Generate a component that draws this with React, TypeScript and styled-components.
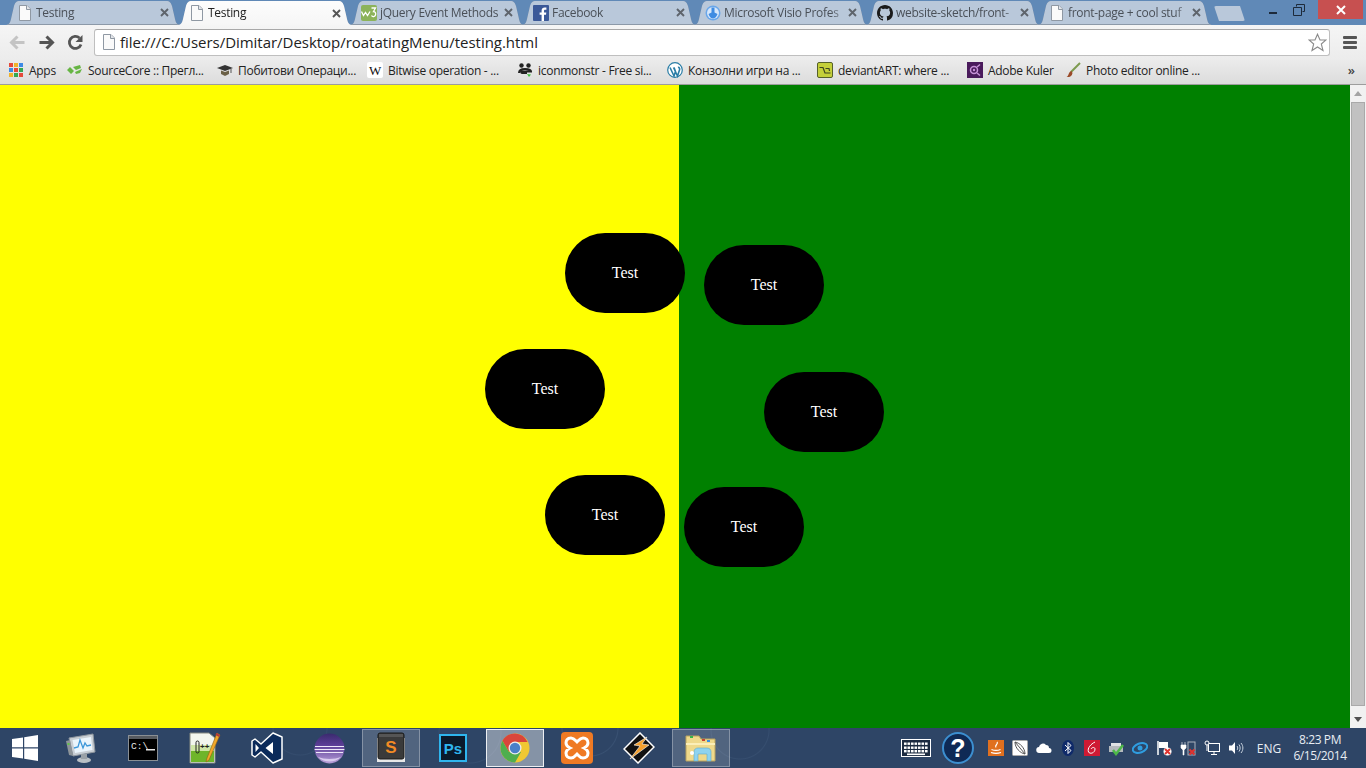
import React from 'react'
import styled, { createGlobalStyle } from 'styled-components'

const GlobalStyle = createGlobalStyle`
  html, body { margin: 0; padding: 0; height: 100%; overflow: hidden; }
  #root { height: 100%; }
  * { box-sizing: border-box; }
`

const Page = styled.div`
  width: 1366px;
  height: 768px;
  display: flex;
  flex-direction: column;
  font-family: "Open Sans", "Noto Sans", sans-serif;
  overflow: hidden;
`

/* ---------- tab strip ---------- */
const TitleBar = styled.div`
  height: 25px;
  flex: none;
  display: flex;
  background: #6089b7;
  padding-left: 5px;
  position: relative;
`

const TabWrap = styled.div<{ $active?: boolean }>`
  width: 176px;
  height: 25px;
  margin-right: -4px;
  flex: none;
  position: relative;
  z-index: ${p => (p.$active ? 2 : 1)};
  filter: drop-shadow(0 0 0.6px ${p => (p.$active ? '#8a99ab' : '#6f7f93')});
`

const TabShape = styled.div<{ $active?: boolean }>`
  height: 25px;
  padding: 1px 0 0 12px;
  display: flex;
  align-items: center;
  clip-path: path('M0 25 C4 25 5 23 6 19 L9 6 C10 3 11 1 15 1 L161 1 C165 1 166 3 167 6 L170 19 C171 23 172 25 176 25 Z');
  background: ${p => (p.$active ? 'linear-gradient(#fdfdfd, #f6f6f6)' : '#b9c8da')};
  ${p => (p.$active ? '' : 'border-bottom: 1px solid #8c99a8;')}
`

const TabIcon = styled.span`
  width: 16px;
  height: 16px;
  flex: none;
  display: block;
  & > svg { display: block; }
`

const TabTitle = styled.span<{ $active?: boolean; $fade?: boolean }>`
  width: 121px;
  margin-left: 3px;
  font-size: 12px;
  letter-spacing: -0.3px;
  line-height: 16px;
  white-space: nowrap;
  color: ${p => (p.$active ? '#222' : '#4a5058')};
  ${p => (p.$fade ? 'mask-image: linear-gradient(to right, #000 88%, rgba(0,0,0,.25));' : '')}
`

const TabClose = styled.span<{ $active?: boolean }>`
  width: 9px;
  height: 9px;
  margin-left: 3px;
  flex: none;
  display: block;
  color: ${p => (p.$active ? '#555' : '#5e646c')};
  & > svg { display: block; }
`

const NewTab = styled.div`
  width: 31px;
  height: 15px;
  margin: 6px 0 0 5px;
  flex: none;
  background: #b9c8da;
  clip-path: polygon(0 0, 26px 0, 31px 100%, 5px 100%);
  border-radius: 2px;
`

const WindowButtons = styled.div`
  margin-left: auto;
  display: flex;
  height: 19px;
`

const WinButton = styled.div<{ $close?: boolean }>`
  width: ${p => (p.$close ? '45px' : '26px')};
  height: 19px;
  display: flex;
  align-items: center;
  justify-content: center;
  background: ${p => (p.$close ? '#c75050' : 'transparent')};
  margin-left: ${p => (p.$close ? '6px' : '0')};
  margin-right: ${p => (p.$close ? '3px' : '0')};
`

/* ---------- toolbar ---------- */
const Toolbar = styled.div`
  height: 35px;
  flex: none;
  display: flex;
  align-items: center;
  background: linear-gradient(#f5f5f5, #ececec);
  padding: 0 0 1px 8px;
`

const NavButton = styled.span`
  width: 19px;
  height: 19px;
  margin-right: 10px;
  display: block;
  flex: none;
  & > svg { display: block; }
`

const Omnibox = styled.div`
  width: 1236px;
  height: 27px;
  margin-left: -1px;
  background: #fff;
  border: 1px solid #bfbfbf;
  border-top-color: #a8a8a8;
  border-radius: 3px;
  display: flex;
  align-items: center;
  padding: 0 2px 0 6px;
`

const UrlText = styled.span`
  margin-left: 3px;
  font-size: 15px;
  letter-spacing: -0.03px;
  color: #222;
  white-space: nowrap;
`

const StarButton = styled.span`
  margin-left: auto;
  width: 19px;
  height: 19px;
  display: block;
  & > svg { display: block; }
`

const MenuButton = styled.span`
  width: 14px;
  margin-left: 13px;
  display: flex;
  flex-direction: column;
  gap: 2px;
`

const MenuBar = styled.i`
  display: block;
  height: 3px;
  background: #555;
  border-radius: 1px;
`

/* ---------- bookmarks ---------- */
const Bookmarks = styled.div`
  height: 25px;
  flex: none;
  display: flex;
  align-items: center;
  background: linear-gradient(#ebebeb, #dcdcdc);
  border-bottom: 1px solid #9d9d9d;
  padding: 0 0 4px 8px;
  position: relative;
`

const Bookmark = styled.div<{ $w: number }>`
  width: ${p => p.$w}px;
  flex: none;
  display: flex;
  align-items: center;
  gap: 5px;
  font-size: 12px;
  letter-spacing: -0.28px;
  color: #222;
  white-space: nowrap;
`

const BookmarkIcon = styled.span`
  width: 16px;
  height: 16px;
  flex: none;
  display: block;
  & > svg { display: block; }
`

const Chevron = styled.span`
  margin-left: auto;
  margin-right: 11px;
  font-size: 13px;
  color: #444;
  font-weight: 600;
`

/* ---------- page content ---------- */
const Viewport = styled.div`
  flex: 1;
  display: flex;
  min-height: 0;
`

const Canvas = styled.div`
  flex: 1;
  display: flex;
  position: relative;
`

const Half = styled.div<{ $bg: string; $w: number }>`
  width: ${p => p.$w}px;
  background: ${p => p.$bg};
`

const Pill = styled.div<{ $x: number; $y: number }>`
  position: absolute;
  left: ${p => p.$x}px;
  top: ${p => p.$y}px;
  width: 120px;
  height: 80px;
  border-radius: 40px;
  background: #000;
  color: #fff;
  display: flex;
  align-items: center;
  justify-content: center;
  font-family: "Liberation Serif", "Times New Roman", serif;
  font-size: 16px;
`

const Scrollbar = styled.div`
  width: 16px;
  flex: none;
  background: #f1f1f1;
  display: flex;
  flex-direction: column;
  align-items: center;
  justify-content: space-between;
  padding: 6px 0;
  position: relative;
`

const Thumb = styled.div`
  position: absolute;
  left: 1px;
  top: 17px;
  width: 14px;
  height: 604px;
  background: #c1c1c1;
  border: 1px solid #a9a9a9;
`

const Arrow = styled.i<{ $down?: boolean }>`
  display: block;
  width: 0;
  height: 0;
  border-left: 4px solid transparent;
  border-right: 4px solid transparent;
  ${p => (p.$down ? 'border-top: 5px solid #505050;' : 'border-bottom: 5px solid #a3a3a3;')}
`

/* ---------- taskbar ---------- */
const Taskbar = styled.div`
  height: 40px;
  flex: none;
  display: flex;
  align-items: center;
  color: #fff;
  background:
    radial-gradient(circle at 590px 0px, transparent 27px, rgba(110,140,175,.16) 28px, transparent 29px),
    radial-gradient(circle at 470px 4px, transparent 30px, rgba(110,140,175,.12) 31px, transparent 32px),
    radial-gradient(circle at 740px 2px, transparent 28px, rgba(110,140,175,.12) 29px, transparent 30px),
    radial-gradient(circle at 300px 0px, transparent 26px, rgba(110,140,175,.1) 27px, transparent 28px),
    #2e4566;
`

const StartSlot = styled.div`
  width: 50px;
  height: 40px;
  flex: none;
  display: flex;
  align-items: center;
  justify-content: center;
`

const TaskSlot = styled.div`
  width: 62px;
  height: 40px;
  flex: none;
  padding: 1px 2px 0;
`

const TaskButton = styled.div<{ $state?: 'open' | 'active' }>`
  width: 58px;
  height: 38px;
  display: flex;
  align-items: center;
  justify-content: center;
  ${p => p.$state === 'open' ? 'background: rgba(255,255,255,.17); border: 1px solid rgba(255,255,255,.3);' : ''}
  ${p => p.$state === 'active' ? 'background: rgba(255,255,255,.42); border: 1px solid rgba(255,255,255,.85);' : ''}
`

const Tray = styled.div`
  margin-left: auto;
  display: flex;
  align-items: center;
  height: 40px;
`

const TraySlot = styled.span<{ $w: number }>`
  width: ${p => p.$w}px;
  flex: none;
  display: flex;
  justify-content: center;
  align-items: center;
`

const Lang = styled.span`
  width: 40px;
  text-align: center;
  font-size: 12px;
  color: #e8edf3;
  margin-left: 1px;
`

const Clock = styled.div`
  width: 68px;
  margin: 0 12px 0 -3px;
  text-align: center;
  font-size: 12px;
  letter-spacing: -0.4px;
  line-height: 16px;
  color: #e8edf3;
`

/* ---------- drawings ---------- */
const FileIcon = () => (
  <svg width="16" height="16" viewBox="0 0 16 16">
    <path d="M2.5 .5H10L13.5 4V15.5H2.5Z" fill="#fafafa" stroke="#8f98a3" />
    <path d="M9.5 .5V4.5H13.5" fill="#e3e6ea" stroke="#8f98a3" />
  </svg>
)

const W3Icon = () => (
  <svg width="16" height="16" viewBox="0 0 16 16">
    <rect width="16" height="16" rx="2" fill="#8cb35a" />
    <path d="M.5 6.500L2.500 10.500 4.500 7.500 6.500 10.500 9 6.500" fill="none" stroke="#fff" strokeWidth="1.300" />
    <path d="M10.500 3H14.500L12.500 6.500C14.500 6.500 15 8.500 14.500 10 14 11.500 11.500 12.500 10.500 10.500" fill="none" stroke="#fff" strokeWidth="1.300" />
  </svg>
)

const FacebookIcon = () => (
  <svg width="16" height="16" viewBox="0 0 16 16">
    <rect width="16" height="16" rx="1" fill="#3b5998" />
    <path d="M11 16V9.800H13L13.300 7.400H11V6C11 5.200 11.300 4.800 12.200 4.800H13.400V2.600C13 2.600 12.400 2.500 11.700 2.500 9.900 2.500 8.600 3.600 8.600 5.700V7.400H6.600V9.800H8.600V16Z" fill="#fff" />
  </svg>
)

const VisioIcon = () => (
  <svg width="16" height="16" viewBox="0 0 16 16">
    <circle cx="8" cy="8" r="7.500" fill="#6aa7ea" />
    <circle cx="8" cy="8" r="6" fill="#d7e7fa" />
    <path d="M6.500 2.500H9.500V7.500L12.500 9C11.500 12 9.500 13.500 8 13.500S4.500 12 3.500 9L6.500 7.500Z" fill="#3f8ce2" />
  </svg>
)

const GithubIcon = () => (
  <svg width="16" height="16" viewBox="0 0 16 16">
    <path fill="#1b1b1b" d="M8 0C3.580 0 0 3.580 0 8c0 3.540 2.290 6.530 5.470 7.590.4.070.55-.17.55-.38 0-.19-.01-.82-.01-1.490-2.010.37-2.530-.49-2.690-.94-.09-.23-.48-.94-.82-1.130-.28-.15-.68-.52-.01-.53.63-.01 1.080.58 1.230.82.720 1.210 1.870.87 2.330.66.070-.52.28-.87.51-1.070-1.780-.2-3.640-.89-3.640-3.950 0-.87.31-1.590.82-2.150-.08-.2-.36-1.020.08-2.120 0 0 .67-.21 2.200.82.64-.18 1.320-.27 2-.27s1.360.09 2 .27c1.530-1.040 2.200-.82 2.200-.82.44 1.100.16 1.920.08 2.120.51.56.82 1.270.82 2.150 0 3.070-1.870 3.750-3.650 3.950.29.25.54.73.54 1.480 0 1.070-.01 1.930-.01 2.200 0 .21.15.46.55.38A8 8 0 0 0 16 8c0-4.420-3.580-8-8-8z" />
  </svg>
)

const CloseX = () => (
  <svg width="9" height="9" viewBox="0 0 9 9">
    <path d="M1 1L8 8M8 1L1 8" stroke="currentColor" strokeWidth="1.900" />
  </svg>
)

const BackArrow = ({ color }: { color: string }) => (
  <svg width="19" height="19" viewBox="0 0 19 19">
    <path d="M16.500 9.500H4M9.500 3.500L3.500 9.500 9.500 15.500" fill="none" stroke={color} strokeWidth="3" />
  </svg>
)

const ForwardArrow = ({ color }: { color: string }) => (
  <svg width="19" height="19" viewBox="0 0 19 19">
    <path d="M2.500 9.500H15M9.500 3.500L15.500 9.500 9.500 15.500" fill="none" stroke={color} strokeWidth="3" />
  </svg>
)

const Reload = () => (
  <svg width="19" height="19" viewBox="0 0 19 19">
    <path d="M15 11.500A6 6 0 1 1 13.500 5" fill="none" stroke="#555" strokeWidth="2.800" />
    <path d="M16.500 2V9H9.500Z" fill="#555" />
  </svg>
)

const StarIcon = () => (
  <svg width="19" height="19" viewBox="0 0 19 19">
    <path d="M9.500 1.200L12 7H18L13.300 11 15 17.500 9.500 14 4 17.500 5.700 11 1 7H7Z" fill="#fff" stroke="#8a8a8a" strokeWidth="1.100" />
  </svg>
)

const AppsIcon = () => {
  const colors = ['#e5493a', '#f1b32b', '#3d8ae6', '#3d8ae6', '#e5493a', '#35a853', '#f1b32b', '#35a853', '#e5493a']
  return (
    <svg width="16" height="16" viewBox="0 0 16 16">
      {colors.map((c, i) => (
        <rect key={i} x={1 + (i % 3) * 5} y={1 + Math.floor(i / 3) * 5} width="4" height="4" fill={c} />
      ))}
    </svg>
  )
}

const SourceCoreIcon = () => (
  <svg width="16" height="16" viewBox="0 0 16 16">
    <path d="M0 8L3 5 7 9 4 12ZM6 5L13 3 14 6 9 8ZM8 10L15 7 13 11 9 12Z" fill="#66b543" />
  </svg>
)

const CapIcon = () => (
  <svg width="16" height="16" viewBox="0 0 16 16">
    <path d="M0 6L8 3 16 6 8 9Z" fill="#333" />
    <path d="M4 8.500V12L8 14 12 12V8.500L8 10Z" fill="#6b6147" />
    <path d="M14 7V11" stroke="#555" />
  </svg>
)

const WikiIcon = () => (
  <svg width="16" height="16" viewBox="0 0 16 16">
    <rect width="16" height="16" rx="2" fill="#fff" />
    <text x="8" y="12.500" textAnchor="middle" fontFamily="Liberation Serif, serif" fontSize="13" fill="#111">W</text>
  </svg>
)

const IconmonstrIcon = () => (
  <svg width="16" height="16" viewBox="0 0 16 16">
    <circle cx="4.500" cy="3.500" r="2.200" fill="#222" />
    <circle cx="11.500" cy="3.500" r="2.200" fill="#222" />
    <path d="M2 11C2 7.500 5 7 8 7S14 7.500 14 9.500H5C4 9.500 4 11 5 11H10" fill="none" stroke="#222" strokeWidth="2" />
    <path d="M10 12L14 12.500 12 15Z" fill="#40c040" />
  </svg>
)

const WordpressIcon = () => (
  <svg width="16" height="16" viewBox="0 0 16 16">
    <circle cx="8" cy="8" r="7.300" fill="#fff" stroke="#2a7da6" strokeWidth="1.200" />
    <path d="M3 5.500L7 14 8.500 9.500 7 5.500M6.500 5.500L10.500 14 12.500 8C13 6.500 12 5 11 5.500" fill="none" stroke="#2a7da6" strokeWidth="1.600" />
  </svg>
)

const DeviantIcon = () => (
  <svg width="16" height="16" viewBox="0 0 16 16">
    <rect x=".5" y=".5" width="15" height="15" rx="1.500" fill="#c4cf3a" stroke="#56602a" />
    <path d="M2.500 5.500H6L8 11H13.500M8.500 6.500H12L12.500 9" fill="none" stroke="#3d4420" strokeWidth="1.200" />
  </svg>
)

const KulerIcon = () => (
  <svg width="16" height="16" viewBox="0 0 16 16">
    <rect width="16" height="16" fill="#4a1b5c" />
    <circle cx="7" cy="8" r="3.500" fill="none" stroke="#c792d8" strokeWidth="1.500" />
    <path d="M10 5L13 2.500M10 11L13 13.500" stroke="#c792d8" strokeWidth="1.500" />
    <circle cx="7" cy="8" r="1.200" fill="#c792d8" />
  </svg>
)

const BrushIcon = () => (
  <svg width="16" height="16" viewBox="0 0 16 16">
    <path d="M15 1L6 10" stroke="#7d9a4f" strokeWidth="2" />
    <path d="M6.500 9C4 9.500 4 12 3 13.500 2.500 14.500 1.500 15 1 15 4 15.500 7 14.500 7.500 11Z" fill="#9a4a28" />
  </svg>
)

const StartIcon = () => (
  <svg width="26" height="26" viewBox="0 0 26 26">
    <path d="M0 4L11 2.500V12.300H0ZM12.200 2.300L26 0V12.300H12.200ZM0 13.500H11V23.500L0 22ZM12.200 13.500H26V26L12.200 23.700Z" fill="#fff" />
  </svg>
)

const TaskMgrIcon = () => (
  <svg width="32" height="32" viewBox="0 0 32 32">
    <path d="M4 6L28 2 30 20 8 24Z" fill="#c8ced4" stroke="#8f979f" />
    <path d="M7.500 8L26 5 27.500 18 10 21Z" fill="#eaf4fc" />
    <path d="M9 16L13 15 15 8 18 16 20 11 22 14 26 13" fill="none" stroke="#3d97d9" strokeWidth="1.300" />
    <path d="M1 9L5 8 8 24 4 23Z" fill="#8d9499" />
    <rect x="2.500" y="11" width="2" height="2" fill="#5fc447" />
    <ellipse cx="19" cy="28" rx="7" ry="3" fill="#b9bfc4" />
    <rect x="16" y="22" width="6" height="5" fill="#9aa1a7" />
  </svg>
)

const CmdIcon = () => (
  <svg width="30" height="26" viewBox="0 0 30 26">
    <rect x=".5" y=".5" width="29" height="25" fill="#000" stroke="#8a8f94" />
    <rect x="1" y="1" width="28" height="3" fill="#565a60" />
    <text x="3" y="14" fontFamily="Liberation Mono, monospace" fontSize="9.500" fill="#e6e6e6">C:\</text>
    <rect x="18" y="14" width="9" height="1.500" fill="#e6e6e6" />
  </svg>
)

const NotepadIcon = () => (
  <svg width="32" height="32" viewBox="0 0 32 32">
    <path d="M1 1H20L26 6V31H1Z" fill="#f2f6ee" stroke="#858a80" />
    <path d="M2 19H25V30H2Z" fill="#6fb52a" />
    <path d="M2 13H25V19H2Z" fill="#cfe6a6" />
    <rect x="7" y="9" width="3" height="12" rx="1.500" fill="none" stroke="#222" />
    <text x="11" y="17" fontFamily="Liberation Sans, sans-serif" fontSize="8" fontWeight="700" fill="#222">++</text>
    <path d="M28 1L18 26 17 30 20 28 31 3Z" fill="#f1a82a" stroke="#8a5f15" strokeWidth=".6" />
    <path d="M27.500 1L31 3 30 5 26.500 3Z" fill="#b33a3a" />
  </svg>
)

const VsIcon = () => (
  <svg width="32" height="32" viewBox="0 0 32 32">
    <path d="M22 1L31 5V27L22 31 10 20 4 25 1 23V9L4 7 10 12Z" fill="#0b2a5a" stroke="#fff" strokeWidth="1.500" strokeLinejoin="round" />
    <path d="M22 10L14.500 16 22 22ZM4.500 12V20L8 16Z" fill="#fff" />
  </svg>
)

const EclipseIcon = () => (
  <svg width="31" height="31" viewBox="0 0 31 31">
    <defs>
      <linearGradient id="eclipseBody" x1="0" y1="0" x2="0" y2="1">
        <stop offset="0" stopColor="#3a2a6e" />
        <stop offset=".4" stopColor="#5d3f98" />
        <stop offset="1" stopColor="#b79fd8" />
      </linearGradient>
    </defs>
    <circle cx="15.500" cy="15.500" r="15" fill="url(#eclipseBody)" />
    <path d="M1 13.500H30M.6 16.500H30.400M2 19.500H29" stroke="#efe9fa" strokeWidth="1.100" />
    <path d="M4 24C10 30 21 30 27 24 21 26.500 10 26.500 4 24Z" fill="#d8cbee" />
  </svg>
)

const SublimeIcon = () => (
  <svg width="32" height="32" viewBox="0 0 32 32">
    <path d="M2 6H30V30H2Z" fill="#e8e8e8" />
    <rect x="3" y="1" width="26" height="26" rx="2" fill="#3a3a3a" stroke="#1a1a1a" />
    <rect x="4" y="2" width="24" height="3" fill="#555" />
    <text x="16" y="21" textAnchor="middle" fontFamily="Liberation Sans, sans-serif" fontSize="17" fontWeight="700" fill="#f28a25">S</text>
  </svg>
)

const PsIcon = () => (
  <svg width="28" height="28" viewBox="0 0 28 28">
    <rect x="1" y="1" width="26" height="26" fill="#0b1a2c" stroke="#2fb5ee" strokeWidth="2" />
    <text x="14" y="20" textAnchor="middle" fontFamily="Liberation Sans, sans-serif" fontSize="15" fontWeight="700" fill="#2fb5ee">Ps</text>
  </svg>
)

const ChromeIcon = () => (
  <svg width="30" height="30" viewBox="0 0 30 30">
    <circle cx="15" cy="15" r="14.500" fill="#f0c832" />
    <path d="M15 .5A14.500 14.500 0 0 0 2.400 7.800L9 19 15 9H27.600A14.500 14.500 0 0 0 15 .5Z" fill="#d9453b" />
    <path d="M2.400 7.800A14.500 14.500 0 0 0 15 29.500L21 19H9Z" fill="#4fae4e" />
    <circle cx="15" cy="15" r="6.500" fill="#eee" />
    <circle cx="15" cy="15" r="5.200" fill="#4a80c9" />
  </svg>
)

const XamppIcon = () => (
  <svg width="32" height="32" viewBox="0 0 32 32">
    <rect width="32" height="32" rx="4" fill="#ef7a24" />
    <path d="M10 6C6 6 5 9 5 11 5 13.500 7 15 9 16 7 17 5 18.500 5 21 5 24 7 26 10 26 13 26 14.500 23.500 16 22 17.500 23.500 19 26 22 26 25 26 27 24 27 21 27 18.500 25 17 23 16 25 15 27 13.500 27 11 27 8 25 6 22 6 19 6 17.500 8.500 16 10 14.500 8.500 13 6 10 6Z" fill="none" stroke="#fff" strokeWidth="3" />
  </svg>
)

const WinampIcon = () => (
  <svg width="32" height="32" viewBox="0 0 32 32">
    <path d="M17 1L31 15 15 31 1 17Z" fill="#111" stroke="#fff" strokeWidth="1.500" />
    <path d="M24 5L11 13 17 14 7 27 26 13 19 12 24 5Z" fill="#f5a02c" stroke="#fff" strokeWidth=".6" />
  </svg>
)

const FolderIcon = () => (
  <svg width="32" height="32" viewBox="0 0 32 32">
    <path d="M1 4H14L16 7H30V29H1Z" fill="#efd98b" stroke="#b9a25e" />
    <rect x="5" y="4" width="3" height="2" fill="#37b54a" />
    <rect x="17" y="7" width="3" height="2" fill="#c8452f" />
    <rect x="22" y="8" width="3" height="2" fill="#3a8fe0" />
    <path d="M1 11H30V13H1Z" fill="#fbeeb8" />
    <path d="M9 29V20C9 17 11 16 13 16H22C25 16 26 18 26 20V29H22V22H13V29Z" fill="#8fd3ef" stroke="#5aa7cc" strokeWidth=".6" />
    <circle cx="7" cy="21" r="2" fill="#fff" />
  </svg>
)

const KeyboardIcon = () => (
  <svg width="30" height="18" viewBox="0 0 30 18">
    <rect x=".5" y=".5" width="29" height="17" fill="#1b2a40" stroke="#fff" />
    {[3.5, 7.5, 11].map(y =>
      [3, 6.500, 10, 13.500, 17, 20.500, 24].map(x => (
        <rect key={`${x}-${y}`} x={x} y={y} width="2.600" height="2.400" fill="#fff" />
      ))
    )}
    <rect x="6" y="14.500" width="18" height="1.600" fill="#fff" />
  </svg>
)

const HelpIcon = () => (
  <svg width="32" height="32" viewBox="0 0 32 32">
    <circle cx="16" cy="16" r="15" fill="#0f2a55" stroke="#3c8fd0" strokeWidth="2" />
    <text x="16" y="25" textAnchor="middle" fontFamily="Liberation Sans, sans-serif" fontSize="25" fontWeight="700" fill="#fff">?</text>
  </svg>
)

const TrayJava = () => (
  <svg width="16" height="16" viewBox="0 0 16 16">
    <rect width="16" height="16" fill="#e0701f" />
    <path d="M9 2C11 4 6 5 8 7.500M3.500 9.500C6 10.500 10 10.500 12.500 9.500M3 12.500C6 13.500 10 13.500 13 12.500" fill="none" stroke="#fff" strokeWidth="1.200" />
  </svg>
)

const TrayFeather = () => (
  <svg width="16" height="16" viewBox="0 0 16 16">
    <rect x=".5" y=".5" width="15" height="15" rx="1" fill="#fff" stroke="#aaa" />
    <path d="M3 2C8 3 13 8 13 14 8 13 3 8 3 2ZM3 2L13 14" fill="none" stroke="#555" />
  </svg>
)

const TrayCloud = () => (
  <svg width="16" height="14" viewBox="0 0 16 14">
    <path d="M3.500 12A3 3 0 0 1 3 6 4 4 0 0 1 10 4 3 3 0 0 1 13 7 2.500 2.500 0 0 1 13 12Z" fill="#fff" />
  </svg>
)

const TrayBluetooth = () => (
  <svg width="12" height="16" viewBox="0 0 12 16">
    <ellipse cx="6" cy="8" rx="6" ry="8" fill="#0f2a6a" />
    <path d="M3 5L9 10.500 6 13.500V2.500L9 5.500 3 11" fill="none" stroke="#fff" />
  </svg>
)

const TrayRed = () => (
  <svg width="16" height="16" viewBox="0 0 16 16">
    <rect width="16" height="16" fill="#cf1a34" />
    <path d="M11 2C7 4 3 8 4.500 12 6 14.500 11 13 11 9 11 7 8 7 7 9" fill="none" stroke="#fff" />
  </svg>
)

const TrayPrinter = () => (
  <svg width="16" height="16" viewBox="0 0 16 16">
    <path d="M1 6H15V12H1Z" fill="#b5b9bd" />
    <path d="M3 3H13V6H3Z" fill="#dfe2e4" />
    <path d="M5 10L8 14 15 5" fill="none" stroke="#4db848" strokeWidth="2.500" />
  </svg>
)

const TraySwirl = () => (
  <svg width="16" height="16" viewBox="0 0 16 16">
    <ellipse cx="8" cy="8" rx="7.500" ry="4.500" fill="none" stroke="#2f9de0" strokeWidth="2" transform="rotate(-20 8 8)" />
    <circle cx="8" cy="8" r="2.500" fill="#2f9de0" />
  </svg>
)

const RedX = ({ x, y }: { x: number; y: number }) => (
  <path d={`M${x} ${y}l5 5m0 -5l-5 5`} stroke="#e0332f" strokeWidth="2" />
)

const TrayFlag = () => (
  <svg width="16" height="16" viewBox="0 0 16 16">
    <path d="M2 1V15" stroke="#fff" strokeWidth="1.500" />
    <path d="M3 2H12V8H3Z" fill="#fff" />
    <circle cx="11.500" cy="11.500" r="4" fill="#fff" />
    <RedX x={9} y={9} />
  </svg>
)

const TrayPower = () => (
  <svg width="16" height="16" viewBox="0 0 16 16">
    <path d="M1 5H6V8L4 10V15H3V10L1 8ZM2 2V5M5 2V5" fill="#fff" stroke="#fff" strokeWidth=".6" />
    <rect x="8" y="2" width="7" height="13" fill="none" stroke="#aab2bc" />
    <RedX x={9.500} y={9.500} />
  </svg>
)

const TrayNetwork = () => (
  <svg width="16" height="16" viewBox="0 0 16 16">
    <rect x="4.500" y="3.500" width="11" height="8" fill="none" stroke="#fff" />
    <path d="M10 12V14.500M7 14.500H13" stroke="#fff" />
    <circle cx="3" cy="3" r="2" fill="#2e4566" stroke="#fff" />
    <path d="M3 5V11" stroke="#fff" />
  </svg>
)

const TraySpeaker = () => (
  <svg width="16" height="16" viewBox="0 0 16 16">
    <path d="M1 5.500H4L7 2V14L4 10.500H1Z" fill="#fff" />
    <path d="M9 6C10 7 10 9 9 10M11 4.500C12.500 6.500 12.500 9.500 11 11.500M13 3C15.500 6 15.500 10 13 13" fill="none" stroke="#c9d3df" />
  </svg>
)

const tabs = [
  { title: 'Testing', icon: <FileIcon /> },
  { title: 'Testing', icon: <FileIcon />, active: true },
  { title: 'jQuery Event Methods', icon: <W3Icon /> },
  { title: 'Facebook', icon: <FacebookIcon /> },
  { title: 'Microsoft Visio Profes', icon: <VisioIcon />, fade: true },
  { title: 'website-sketch/front-', icon: <GithubIcon />, fade: true },
  { title: 'front-page + cool stuf', icon: <FileIcon />, fade: true },
]

const bookmarks = [
  { w: 59, label: 'Apps', icon: <AppsIcon /> },
  { w: 150, label: 'SourceCore :: Прегл...', icon: <SourceCoreIcon /> },
  { w: 150, label: 'Побитови Операци...', icon: <CapIcon /> },
  { w: 150, label: 'Bitwise operation - ...', icon: <WikiIcon /> },
  { w: 150, label: 'iconmonstr - Free si...', icon: <IconmonstrIcon /> },
  { w: 150, label: 'Конзолни игри на ...', icon: <WordpressIcon /> },
  { w: 150, label: 'deviantART: where ...', icon: <DeviantIcon /> },
  { w: 98, label: 'Adobe Kuler', icon: <KulerIcon /> },
  { w: 160, label: 'Photo editor online ...', icon: <BrushIcon /> },
]

const pills = [
  { x: 565, y: 148 },
  { x: 704, y: 160 },
  { x: 485, y: 264 },
  { x: 764, y: 287 },
  { x: 545, y: 390 },
  { x: 684, y: 402 },
]

const taskItems: { icon: React.ReactNode; state?: 'open' | 'active' }[] = [
  { icon: <TaskMgrIcon /> },
  { icon: <CmdIcon /> },
  { icon: <NotepadIcon /> },
  { icon: <VsIcon /> },
  { icon: <EclipseIcon /> },
  { icon: <SublimeIcon />, state: 'open' },
  { icon: <PsIcon /> },
  { icon: <ChromeIcon />, state: 'active' },
  { icon: <XamppIcon /> },
  { icon: <WinampIcon /> },
  { icon: <FolderIcon />, state: 'open' },
]

const trayItems = [
  <TrayJava />, <TrayFeather />, <TrayCloud />, <TrayBluetooth />, <TrayRed />, <TrayPrinter />,
  <TraySwirl />, <TrayFlag />, <TrayPower />, <TrayNetwork />, <TraySpeaker />,
]

export default function App() {
  return (
    <Page>
      <GlobalStyle />
      <TitleBar>
        {tabs.map((tab, i) => (
          <TabWrap key={i} $active={tab.active}>
            <TabShape $active={tab.active}>
              <TabIcon>{tab.icon}</TabIcon>
              <TabTitle $active={tab.active} $fade={tab.fade}>{tab.title}</TabTitle>
              <TabClose $active={tab.active}><CloseX /></TabClose>
            </TabShape>
          </TabWrap>
        ))}
        <NewTab />
        <WindowButtons>
          <WinButton>
            <svg width="10" height="10" viewBox="0 0 10 10"><rect x="1" y="7" width="8" height="2" fill="#1d2a3a" /></svg>
          </WinButton>
          <WinButton>
            <svg width="12" height="12" viewBox="0 0 12 12">
              <path d="M3.500 2.500V.5H11.500V7.500H9.500M.5 3.500H8.500V11.500H.5Z" fill="none" stroke="#1d2a3a" />
            </svg>
          </WinButton>
          <WinButton $close>
            <svg width="12" height="12" viewBox="0 0 12 12"><path d="M2 2L10 10M10 2L2 10" stroke="#fff" strokeWidth="2" /></svg>
          </WinButton>
        </WindowButtons>
      </TitleBar>

      <Toolbar>
        <NavButton><BackArrow color="#c4c4c4" /></NavButton>
        <NavButton><ForwardArrow color="#555" /></NavButton>
        <NavButton><Reload /></NavButton>
        <Omnibox>
          <TabIcon><FileIcon /></TabIcon>
          <UrlText>file:///C:/Users/Dimitar/Desktop/roatatingMenu/testing.html</UrlText>
          <StarButton><StarIcon /></StarButton>
        </Omnibox>
        <MenuButton><MenuBar /><MenuBar /><MenuBar /></MenuButton>
      </Toolbar>

      <Bookmarks>
        {bookmarks.map((b, i) => (
          <Bookmark key={i} $w={b.w}>
            <BookmarkIcon>{b.icon}</BookmarkIcon>
            {b.label}
          </Bookmark>
        ))}
        <Chevron>»</Chevron>
      </Bookmarks>

      <Viewport>
        <Canvas>
          <Half $bg="#ffff00" $w={679} />
          <Half $bg="#008000" $w={671} />
          {pills.map((p, i) => (
            <Pill key={i} $x={p.x} $y={p.y}>Test</Pill>
          ))}
        </Canvas>
        <Scrollbar>
          <Arrow />
          <Thumb />
          <Arrow $down />
        </Scrollbar>
      </Viewport>

      <Taskbar>
        <StartSlot><StartIcon /></StartSlot>
        {taskItems.map((t, i) => (
          <TaskSlot key={i}>
            <TaskButton $state={t.state}>{t.icon}</TaskButton>
          </TaskSlot>
        ))}
        <Tray>
          <TraySlot $w={32}><KeyboardIcon /></TraySlot>
          <TraySlot $w={52}><HelpIcon /></TraySlot>
          {trayItems.map((item, i) => (
            <TraySlot key={i} $w={24}>{item}</TraySlot>
          ))}
          <Lang>ENG</Lang>
          <Clock>8:23 PM<br />6/15/2014</Clock>
        </Tray>
      </Taskbar>
    </Page>
  )
}
